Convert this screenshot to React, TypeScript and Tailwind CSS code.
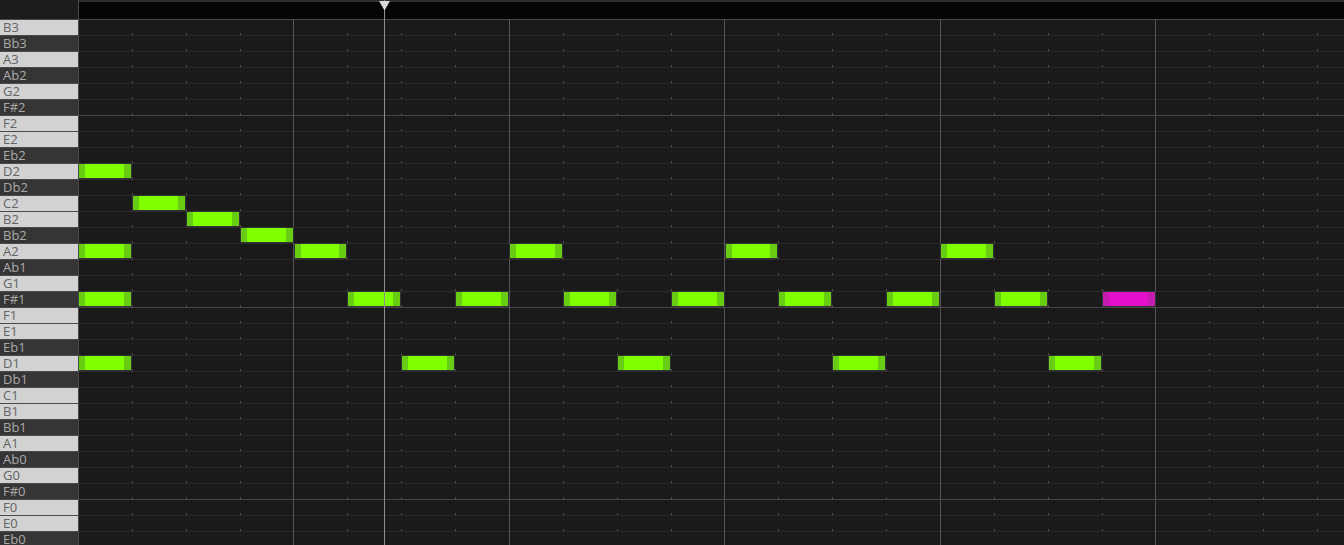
import React from "react";

type Note = { beat: number; key: string; color?: "green" | "magenta" };

const KEYS = [
  "B3", "Bb3", "A3", "Ab2", "G2", "F#2", "F2", "E2", "Eb2", "D2", "Db2",
  "C2", "B2", "Bb2", "A2", "Ab1", "G1", "F#1", "F1", "E1", "Eb1", "D1",
  "Db1", "C1", "B1", "Bb1", "A1", "Ab0", "G0", "F#0", "F0", "E0", "Eb0",
];

// grid origin in page coords, beat width in px
const ORIGIN = 78;
const GRID_LEFT = 79;
const BEAT = 53.875;
const ROW = 16;
const PLAYHEAD_X = 384;

const NOTES: Note[] = [
  { beat: 0, key: "D2" },
  { beat: 0, key: "A2" },
  { beat: 0, key: "F#1" },
  { beat: 0, key: "D1" },
  { beat: 1, key: "C2" },
  { beat: 2, key: "B2" },
  { beat: 3, key: "Bb2" },
  { beat: 4, key: "A2" },
  { beat: 5, key: "F#1" },
  { beat: 6, key: "D1" },
  { beat: 7, key: "F#1" },
  { beat: 8, key: "A2" },
  { beat: 9, key: "F#1" },
  { beat: 10, key: "D1" },
  { beat: 11, key: "F#1" },
  { beat: 12, key: "A2" },
  { beat: 13, key: "F#1" },
  { beat: 14, key: "D1" },
  { beat: 15, key: "F#1" },
  { beat: 16, key: "A2" },
  { beat: 17, key: "F#1" },
  { beat: 18, key: "D1" },
  { beat: 19, key: "F#1", color: "magenta" },
];

const isBlack = (k: string) => k.includes("b") || k.includes("#");
const isOctaveEdge = (k: string) => k.startsWith("F") && !k.includes("#");

const beatX = (k: number) => Math.round(ORIGIN + BEAT * k) - GRID_LEFT;

function PianoKey({ name }: { name: string }) {
  const black = isBlack(name);
  return (
    <div
      className={`h-[16px] shrink-0 border-t border-[#4a4a4a] pl-[3px] flex items-center text-[13px] leading-none ${
        black ? "bg-[#353535] text-[#aaaaaa]" : "bg-[#d2d2d2] text-[#646464]"
      }`}
    >
      <span>{name}</span>
    </div>
  );
}

function NoteBlock({ note }: { note: Note }) {
  const row = KEYS.indexOf(note.key);
  const left = beatX(note.beat);
  const width = beatX(note.beat + 1) - left;
  const magenta = note.color === "magenta";
  return (
    <div
      className="absolute flex border border-[#333333]"
      style={{ left, top: row * ROW, width, height: ROW }}
    >
      <div className={`w-[6px] shrink-0 ${magenta ? "bg-[#c31cae]" : "bg-[#68cc12]"}`} />
      <div className={`flex-1 ${magenta ? "bg-[#e40fcb]" : "bg-[#7fff00]"}`} />
      <div className={`w-[7px] shrink-0 ${magenta ? "bg-[#c31cae]" : "bg-[#68cc12]"}`} />
    </div>
  );
}

export default function App() {
  const beats = Array.from({ length: 24 }, (_, i) => i + 1).filter((k) => k % 4 !== 0);
  const bars = [1, 2, 3, 4, 5];

  return (
    <div
      className="relative w-[1344px] h-[545px] overflow-hidden bg-[#1a1a1a] flex flex-col"
      style={{ fontFamily: '"Open Sans", "DejaVu Sans", sans-serif' }}
    >
      {/* Ruler */}
      <div className="flex h-[19px] shrink-0">
        <div className="w-[79px] shrink-0 bg-[#1c1c1c] border-r border-[#474747]" />
        <div className="flex-1 bg-[#050505] border-t-2 border-[#2e2e2e]" />
      </div>

      <div className="flex flex-1 min-h-0">
        {/* Keyboard */}
        <div className="w-[79px] shrink-0 border-r border-[#474747] flex flex-col overflow-hidden">
          {KEYS.map((k) => (
            <PianoKey key={k} name={k} />
          ))}
        </div>

        {/* Note grid */}
        <div className="relative flex-1 overflow-hidden">
          {KEYS.map((k, i) => (
            <div
              key={k}
              className={`h-[16px] border-t ${
                i === 0 || isOctaveEdge(k) ? "border-[#464646]" : "border-[#2b2b2b]"
              }`}
            />
          ))}

          {/* beat ticks */}
          {KEYS.map((k, i) =>
            beats.map((b) => (
              <div
                key={`${k}-${b}`}
                className="absolute w-px h-[2px] bg-[#505050]"
                style={{ left: beatX(b), top: i * ROW + 14 }}
              />
            ))
          )}

          {/* bar lines */}
          {bars.map((n) => (
            <div
              key={n}
              className="absolute top-0 bottom-0 w-px bg-[#555555]"
              style={{ left: Math.floor(ORIGIN + BEAT * 4 * n) - GRID_LEFT }}
            />
          ))}

          {NOTES.map((n, i) => (
            <NoteBlock key={i} note={n} />
          ))}
        </div>
      </div>

      {/* Playhead */}
      <div
        className="absolute top-0 bottom-0 w-px bg-[#8e8e8e]"
        style={{ left: PLAYHEAD_X }}
      />
      <svg
        className="absolute top-[1px]"
        style={{ left: PLAYHEAD_X - 5 }}
        width="11"
        height="10"
        viewBox="0 0 11 10"
      >
        <polygon points="0,0 11,0 5.5,9.5" fill="#d9d9d9" />
      </svg>
    </div>
  );
}
